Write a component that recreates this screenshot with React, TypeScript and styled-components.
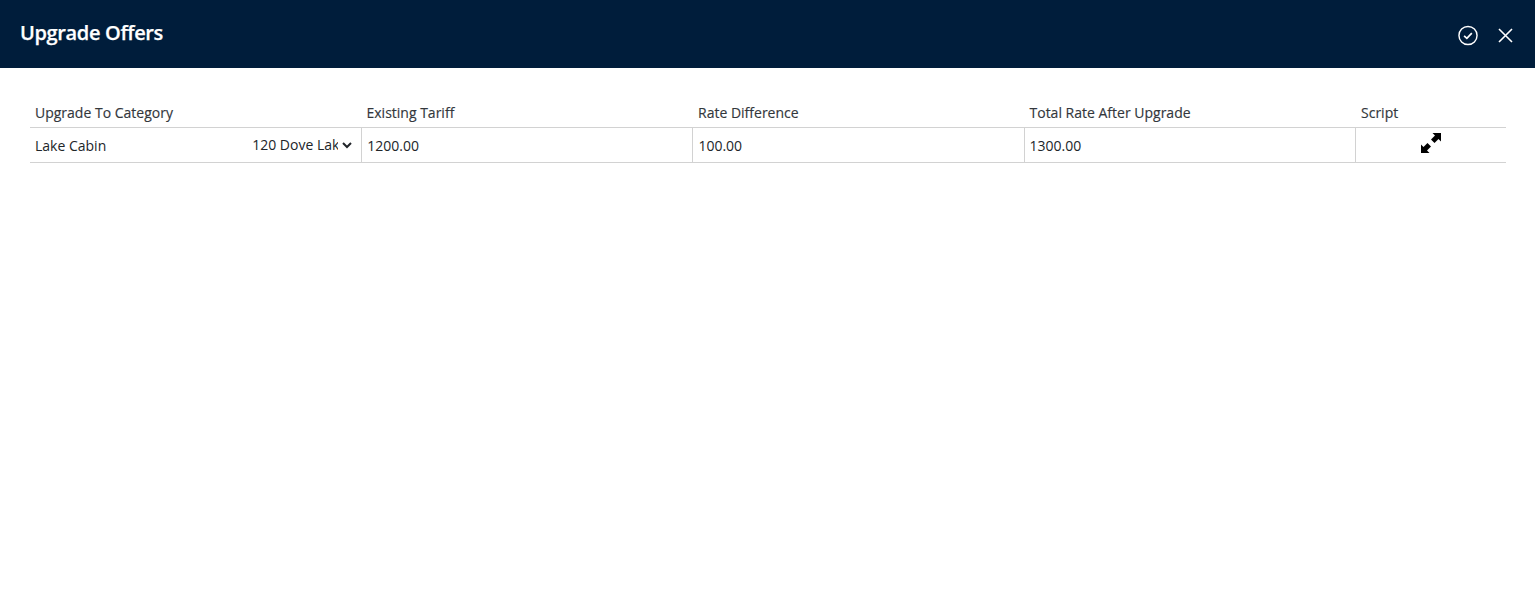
import React from "react";
import styled, { createGlobalStyle } from "styled-components";

const Global = createGlobalStyle`
  html, body { margin: 0; padding: 0; background: #fff; }
  body { font-family: "Open Sans", "Liberation Sans", sans-serif; color: #212529; }
`;

const Page = styled.div`
  width: 1535px;
  height: 601px;
  overflow: hidden;
  background: #fff;
`;

const Header = styled.header`
  height: 68px;
  background: #001d3b;
  display: flex;
  align-items: center;
  justify-content: space-between;
  padding: 0 20px 0 20px;
`;

const Title = styled.h1`
  margin: 0 0 4px;
  font-size: 20px;
  font-weight: 600;
  letter-spacing: -0.35px;
  -webkit-text-stroke: 0.25px #fff;
  color: #fff;
`;

const Actions = styled.div`
  display: flex;
  align-items: center;
  gap: 17px;
  padding-top: 3px;
`;

const IconButton = styled.button`
  width: 20px;
  height: 22px;
  padding: 0;
  border: 0;
  background: none;
  color: #fff;
  display: flex;
  align-items: center;
  justify-content: center;
`;

const Content = styled.main`
  padding: 32px 29px 0 30px;
`;

const Row = styled.div<{ $head?: boolean }>`
  display: grid;
  grid-template-columns: repeat(4, ${(p) => (p.$head ? "331.5px" : "331.2px")}) 1fr;
  border-bottom: 1px solid #d2d2d2;
`;

const HeadCell = styled.div`
  height: 27px;
  padding: 3px 5px 0;
  box-sizing: border-box;
  font-size: 14px;
  line-height: 19px;
  color: #33373c;
  -webkit-text-stroke: 0.15px #33373c;
`;

const Cell = styled.div<{ $center?: boolean }>`
  height: 34px;
  box-sizing: border-box;
  padding: 1px 5px 0;
  font-size: 14px;
  line-height: 19px;
  color: #212529;
  display: flex;
  align-items: center;
  justify-content: ${(p) => (p.$center ? "center" : "flex-start")};
  & + & { border-left: 1px solid #d2d2d2; }
`;

const CategoryCell = styled(Cell)`
  justify-content: space-between;
  padding-right: 6px;
`;

const RoomSelect = styled.select`
  width: 107px;
  height: 24px;
  margin-top: -2px;
  border: 0;
  background: transparent;
  font-family: inherit;
  font-size: 14px;
  color: #212529;
  padding: 0 1px 0 0;
  outline: none;
`;

const ExpandIcon = styled.svg`
  display: block;
  color: #000;
  margin: -6px 0 0 0;
`;

export default function App() {
  return (
    <Page>
      <Global />
      <Header>
        <Title>Upgrade Offers</Title>
        <Actions>
          <IconButton aria-label="Confirm">
            <svg width="21" height="21" viewBox="0 0 21 21" fill="none" stroke="currentColor">
              <circle cx="10.5" cy="10.5" r="9.5" strokeWidth="1.5" />
              <path d="M6.4 10.9l2.9 2.6 5.2-5.4" strokeWidth="1.8" />
            </svg>
          </IconButton>
          <IconButton aria-label="Close">
            <svg width="15" height="15" viewBox="0 0 15 15" fill="none" stroke="currentColor" strokeWidth="1.6">
              <path d="M1 1l13 13M14 1L1 14" />
            </svg>
          </IconButton>
        </Actions>
      </Header>
      <Content>
        <Row $head>
          <HeadCell>Upgrade To Category</HeadCell>
          <HeadCell>Existing Tariff</HeadCell>
          <HeadCell>Rate Difference</HeadCell>
          <HeadCell>Total Rate After Upgrade</HeadCell>
          <HeadCell>Script</HeadCell>
        </Row>
        <Row>
          <CategoryCell>
            Lake Cabin
            <RoomSelect defaultValue="120">
              <option value="120">120 Dove Lake View</option>
            </RoomSelect>
          </CategoryCell>
          <Cell>1200.00</Cell>
          <Cell>100.00</Cell>
          <Cell>1300.00</Cell>
          <Cell $center>
            <ExpandIcon width="20" height="20" viewBox="0 0 20 20" fill="currentColor">
              <path d="M20 0H11.5l2.5 2.5-4 4 3.5 3.5 4-4L20 8.5zM0 20h8.5L6 17.5l4-4L6.500 10l-4 4L0 11.500z" />
            </ExpandIcon>
          </Cell>
        </Row>
      </Content>
    </Page>
  );
}
